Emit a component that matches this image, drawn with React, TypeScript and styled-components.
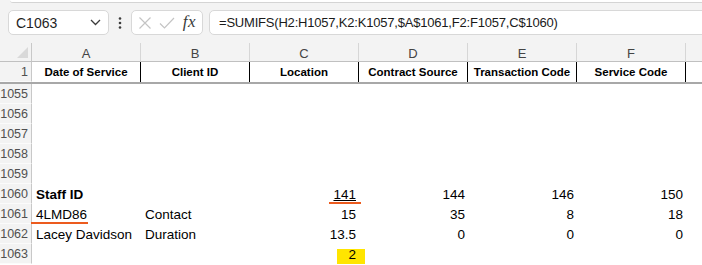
import styled, {createGlobalStyle} from "styled-components"

const GlobalStyle = createGlobalStyle`
  body {
    margin: 0;
    background: #ffffff;
    font-family: "Liberation Sans", Arial, sans-serif;
    overflow: hidden;
  }
`

const chrome = "#f3f3f3"
const headerLine = "#d6d6d6"

const Page = styled.div`
  width: 702px;
  height: 265px;
  overflow: hidden;
  background: #ffffff;
`

const TopStrip = styled.div`
  background: ${chrome};
  height: 4px;
  padding-left: 10px;
`

const RibbonEdge = styled.div`
  height: 2px;
  background: #ffffff;
  border-bottom: 1px solid #d4d4d4;
  border-bottom-left-radius: 6px;
`

const Toolbar = styled.div`
  background: ${chrome};
  height: 39px;
  box-sizing: border-box;
  padding: 6px 0 0 8px;
  display: flex;
  align-items: flex-start;
`

const Box = styled.div`
  height: 25px;
  box-sizing: border-box;
  background: #ffffff;
  border: 1px solid #d8d8d8;
  border-radius: 5px;
  display: flex;
  align-items: center;
`

const NameBox = styled(Box)`
  width: 101px;
  padding: 0 7px 0 7px;
  justify-content: space-between;
  font-size: 14px;
  color: #1f1f1f;
`

const Kebab = styled.div`
  width: 22px;
  height: 25px;
  display: flex;
  align-items: center;
  justify-content: center;
`

const FxBox = styled(Box)`
  width: 72px;
  padding: 0 6px 0 6px;
  justify-content: space-between;
`

const Fx = styled.span`
  font-family: "Liberation Serif", "Times New Roman", serif;
  font-style: italic;
  font-size: 17px;
  color: #3a3a3a;
  letter-spacing: 0.5px;
  margin-top: -2px;
`

const FormulaInput = styled(Box)`
  flex: 1;
  margin-left: 6px;
  margin-right: -8px;
  padding-left: 9px;
  font-size: 13px;
  letter-spacing: -0.2px;
  color: #1a1a1a;
`

const Sheet = styled.div`
  display: grid;
  grid-template-columns: 32px repeat(6, 109px) 1fr;
  grid-template-rows: 19px 20px 2px repeat(9, 20px);
`

const Corner = styled.div`
  background: ${chrome};
  border-right: 1px solid #c8c8c8;
  border-bottom: 1px solid #c0c0c0;
  box-sizing: border-box;
  position: relative;
  &::after {
    content: "";
    position: absolute;
    right: 3px;
    bottom: 3px;
    width: 11px;
    height: 11px;
    background: #d9d9d9;
    clip-path: polygon(100% 0, 100% 100%, 0 100%);
  }
`

const ColHead = styled.div<{$last?: boolean}>`
  background: ${chrome};
  box-sizing: border-box;
  border-right: ${({$last}) => $last ? "none" : `1px solid ${headerLine}`};
  border-bottom: 1px solid #c0c0c0;
  display: flex;
  align-items: center;
  justify-content: center;
  padding-top: 3px;
  font-size: 13px;
  color: #444444;
`

const RowHead = styled.div`
  background: ${chrome};
  box-sizing: border-box;
  border-right: 1px solid #c8c8c8;
  border-bottom: 1px solid #fbfbfb;
  display: flex;
  align-items: center;
  justify-content: flex-end;
  padding-right: 3px;
  font-size: 12.5px;
  color: #505050;
`

const FreezeLine = styled.div`
  grid-column: 1 / -1;
  background: #a8a8a8;
`

const TitleCell = styled.div<{$edge: boolean}>`
  box-sizing: border-box;
  border-right: ${({$edge}) => $edge ? "1px solid #000000" : "none"};
  display: flex;
  align-items: center;
  justify-content: center;
  font-size: 11.5px;
  font-weight: bold;
  color: #000000;
  white-space: nowrap;
`

const Cell = styled.div<{$right?: boolean; $bold?: boolean}>`
  box-sizing: border-box;
  padding: 0 3px 0 4px;
  display: flex;
  align-items: center;
  justify-content: ${({$right}) => $right ? "flex-end" : "flex-start"};
  font-size: 13.5px;
  font-weight: ${({$bold}) => $bold ? "bold" : "normal"};
  color: #000000;
  white-space: nowrap;
  overflow: visible;
`

type MarkKind = "squiggle" | "underline" | "highlight"

const Mark = styled.span<{$kind: MarkKind}>`
  position: relative;
  z-index: 0;
  text-decoration: ${({$kind}) => $kind === "underline" ? "underline" : "none"};
  &::after {
    content: "";
    position: absolute;
    z-index: -1;
    ${({$kind}) => $kind === "highlight" ? `
      left: -11px;
      right: -9px;
      top: 2px;
      bottom: -2px;
      background: #ffe500;
    ` : $kind === "underline" ? `
      left: -4px;
      right: -5px;
      bottom: -2px;
      height: 2px;
      background: #ec5b1e;
    ` : `
      left: -5px;
      right: -1px;
      bottom: -2px;
      height: 2px;
      background: #ec5b1e;
    `}
  }
`

const Chevron = () => (
  <svg width="11" height="7" viewBox="0 0 11 7">
    <path d="M1 1 L5.5 5.5 L10 1" fill="none" stroke="#3c3c3c" strokeWidth="1.3" />
  </svg>
)

const Dots = () => (
  <svg width="4" height="12" viewBox="0 0 4 12">
    <circle cx="2" cy="1.5" r="1.3" fill="#3c3c3c" />
    <circle cx="2" cy="6" r="1.3" fill="#3c3c3c" />
    <circle cx="2" cy="10.5" r="1.3" fill="#3c3c3c" />
  </svg>
)

const Cross = () => (
  <svg width="14" height="14" viewBox="0 0 14 14">
    <path d="M1.5 1.5 L12.5 12.5 M12.5 1.5 L1.5 12.5" stroke="#c4c4c4" strokeWidth="1.2" />
  </svg>
)

const Check = () => (
  <svg width="16" height="12" viewBox="0 0 16 12">
    <path d="M1 6.5 L5.5 11 L15 1" fill="none" stroke="#c4c4c4" strokeWidth="1.2" />
  </svg>
)

const columns = ["A", "B", "C", "D", "E", "F", ""]
const titles = [
  "Date of Service", "Client ID", "Location",
  "Contract Source", "Transaction Code", "Service Code", "",
]

interface ICellData {
  text: string;
  right?: boolean;
  bold?: boolean;
  mark?: MarkKind;
}

const rows: {num: number; cells: (ICellData | null)[]}[] = [
  {num: 1055, cells: []},
  {num: 1056, cells: []},
  {num: 1057, cells: []},
  {num: 1058, cells: []},
  {num: 1059, cells: []},
  {num: 1060, cells: [
    {text: "Staff ID", bold: true}, null,
    {text: "141", right: true, mark: "underline"},
    {text: "144", right: true},
    {text: "146", right: true},
    {text: "150", right: true},
  ]},
  {num: 1061, cells: [
    {text: "4LMD86", mark: "squiggle"},
    {text: "Contact"},
    {text: "15", right: true},
    {text: "35", right: true},
    {text: "8", right: true},
    {text: "18", right: true},
  ]},
  {num: 1062, cells: [
    {text: "Lacey Davidson"},
    {text: "Duration"},
    {text: "13.5", right: true},
    {text: "0", right: true},
    {text: "0", right: true},
    {text: "0", right: true},
  ]},
  {num: 1063, cells: [
    null, null,
    {text: "2", right: true, mark: "highlight"},
  ]},
]

const App = () => {
  return (
    <Page>
      <GlobalStyle />
      <TopStrip><RibbonEdge /></TopStrip>
      <Toolbar>
        <NameBox>
          <span>C1063</span>
          <Chevron />
        </NameBox>
        <Kebab><Dots /></Kebab>
        <FxBox>
          <Cross />
          <Check />
          <Fx>fx</Fx>
        </FxBox>
        <FormulaInput>=SUMIFS(H2:H1057,K2:K1057,$A$1061,F2:F1057,C$1060)</FormulaInput>
      </Toolbar>
      <Sheet>
        <Corner />
        {columns.map((c, i) => (
          <ColHead key={`h${i}`} $last={i === columns.length - 1}>{c}</ColHead>
        ))}
        <RowHead>1</RowHead>
        {titles.map((t, i) => (
          <TitleCell key={`t${i}`} $edge={i < titles.length - 1}>{t}</TitleCell>
        ))}
        <FreezeLine />
        {rows.map(row => [
          <RowHead key={`r${row.num}`}>{row.num}</RowHead>,
          ...columns.map((_, i) => {
            const cell = row.cells[i]
            return (
              <Cell key={`${row.num}-${i}`} $right={cell?.right} $bold={cell?.bold}>
                {
                  cell?.mark ? (
                    <Mark $kind={cell.mark}>{cell.text}</Mark>
                  ) : cell?.text
                }
              </Cell>
            )
          }),
        ])}
      </Sheet>
    </Page>
  )
}

export default App
